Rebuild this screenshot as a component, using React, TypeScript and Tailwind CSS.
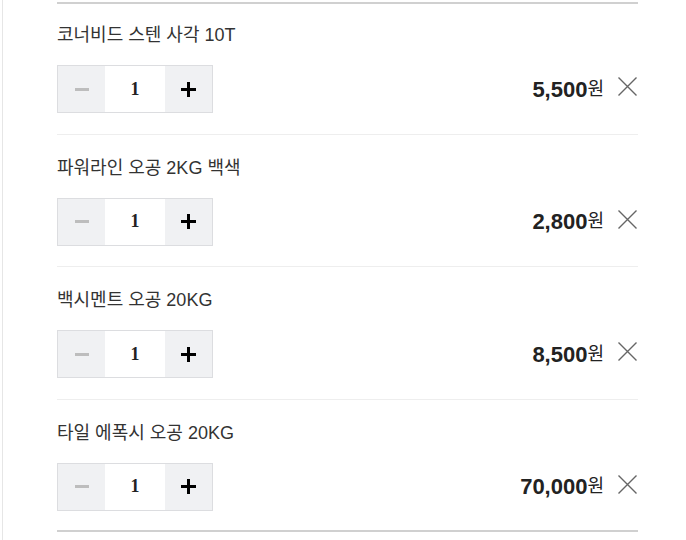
import React from 'react';

interface CartItem {
  name: string;
  qty: number;
  price: string;
}

const items: CartItem[] = [
  { name: '코너비드 스텐 사각 10T', qty: 1, price: '5,500' },
  { name: '파워라인 오공 2KG 백색', qty: 1, price: '2,800' },
  { name: '백시멘트 오공 20KG', qty: 1, price: '8,500' },
  { name: '타일 에폭시 오공 20KG', qty: 1, price: '70,000' },
];

const CloseIcon = () => (
  <svg width="21" height="21" viewBox="0 0 21 21" fill="none">
    <path d="M1.5 1.5 L19.5 19.5 M19.5 1.5 L1.5 19.5" stroke="#666" strokeWidth="1.4" />
  </svg>
);

const QtyBox: React.FC<{ qty: number }> = ({ qty }) => (
  <div className="flex h-[48px] w-[156px] border border-[#dcdde0]">
    <button className="flex w-[47px] items-center justify-center bg-[#f0f1f3]">
      <span className="block h-[3px] w-[14px] bg-[#bdbdbd]" />
    </button>
    <div className="flex w-[60px] items-center justify-center bg-white font-['Liberation_Serif',serif] text-[18px] font-bold text-[#222]">
      {qty}
    </div>
    <button className="relative flex w-[47px] items-center justify-center bg-[#f0f1f3]">
      <span className="absolute h-[3px] w-[15px] bg-black" />
      <span className="absolute h-[15px] w-[3px] bg-black" />
    </button>
  </div>
);

export default function App() {
  return (
    <div className="flex min-h-[540px] bg-white font-['Liberation_Sans','Noto_Sans_CJK_KR',sans-serif]">
      <div className="ml-[2px] w-px bg-[#e6e6e6]" />
      <div className="ml-[54px] mt-[2px] w-[581px]">
        <ul className="border-y-2 border-[#d0d0d0]">
          {items.map((item, i) => (
            <li
              key={item.name}
              className={`${i === items.length - 1 ? 'pb-[19px]' : 'pb-[20.5px]'} ${i > 0 ? 'border-t border-[#eeeeee] pt-[21px]' : 'pt-[19px]'}`}
            >
              <p className="h-[24px] text-[18px] leading-[24px] text-[#333]">{item.name}</p>
              <div className="mt-[18px] flex items-center justify-between">
                <QtyBox qty={item.qty} />
                <div className="flex items-center">
                  <span className="text-[22px] font-bold text-[#222]">{item.price}</span>
                  <span className="text-[18px] text-[#222]">원</span>
                  <span className="ml-[13px] -mt-[5px] flex">
                    <CloseIcon />
                  </span>
                </div>
              </div>
            </li>
          ))}
        </ul>
      </div>
    </div>
  );
}
